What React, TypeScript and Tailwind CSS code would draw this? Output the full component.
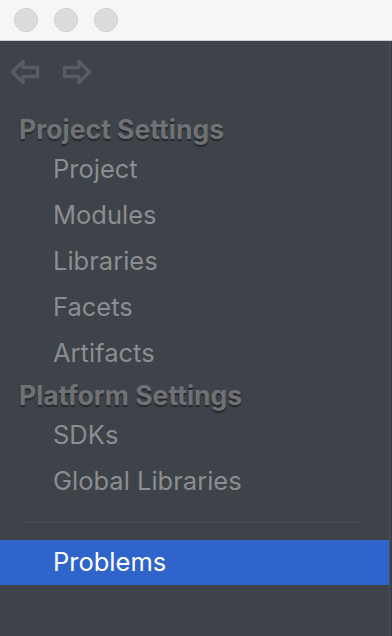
import React from "react";

const Arrow = ({ dir }: { dir: "left" | "right" }) => (
  <svg width="30" height="26" viewBox="0 0 30 26" className={dir === "right" ? "-scale-x-100" : ""}>
    <path
      d="M2.5 13 L13 2.5 L13 8.5 L27.5 8.5 L27.5 17.5 L13 17.5 L13 23.5 Z"
      fill="none"
      stroke="#585b61"
      strokeWidth="3.5"
      strokeLinejoin="round"
    />
  </svg>
);

const Item = ({ label }: { label: string }) => (
  <div className="h-[46px] flex items-center pl-[53px] text-[25.5px] text-[#8b8d90]">{label}</div>
);

const Heading = ({ label }: { label: string }) => (
  <div
    className="h-[36px] flex items-center pl-[19px] pt-[4px] text-[26.5px] font-bold text-[#6f7175]"
    style={{ textShadow: "0 2px 1px #26282c" }}
  >
    {label}
  </div>
);

export default function App() {
  return (
    <div className="w-[392px] h-[636px] flex flex-col overflow-hidden" style={{ fontFamily: "Inter, 'Noto Sans', sans-serif" }}>
      <div className="h-[41px] shrink-0 bg-[#f6f6f6] border-b border-[#d0d0d0] flex items-center pl-[14px] gap-[16px]">
        <div className="w-[24px] h-[24px] rounded-full bg-[#dcdcdc] border border-[#cfcfcf]" />
        <div className="w-[24px] h-[24px] rounded-full bg-[#dcdcdc] border border-[#cfcfcf]" />
        <div className="w-[24px] h-[24px] rounded-full bg-[#dcdcdc] border border-[#cfcfcf]" />
      </div>
      <div className="flex-1 flex bg-[#3e4249]">
        <div className="flex-1 flex flex-col">
          <div className="h-[69px] flex items-center gap-[22px] pl-[10px] pb-[8px]">
            <Arrow dir="left" />
            <Arrow dir="right" />
          </div>
          <Heading label="Project Settings" />
          <Item label="Project" />
          <Item label="Modules" />
          <Item label="Libraries" />
          <Item label="Facets" />
          <Item label="Artifacts" />
          <Heading label="Platform Settings" />
          <Item label="SDKs" />
          <Item label="Global Libraries" />
          <div className="mt-[18px] ml-[22px] w-[340px] h-px bg-[#4a4e55]" />
          <div className="mt-[17px] h-[45px] bg-[#2f64cb] flex items-center pl-[53px] text-[25.5px] text-white">
            Problems
          </div>
        </div>
        <div className="w-px bg-[#4d5158]" />
        <div className="w-[2px] bg-[#3b3f46]" />
      </div>
    </div>
  );
}
